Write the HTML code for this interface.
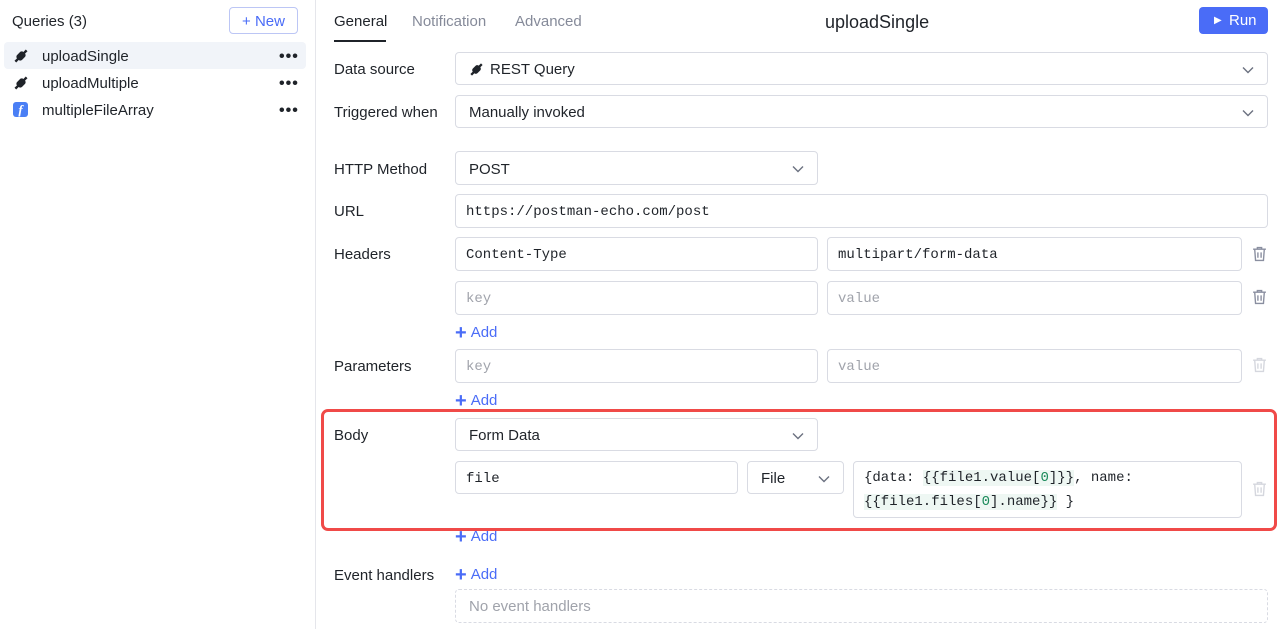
<!DOCTYPE html>
<html><head><meta charset="utf-8"><style>
*{box-sizing:border-box;margin:0;padding:0}
body{width:1280px;height:629px;overflow:hidden;background:#fff;font-family:"Liberation Sans",sans-serif;color:#1f2329;position:relative}
.a{position:absolute}
.lbl{position:absolute;left:334px;font-size:15px;color:#1f2329}
.in{position:absolute;border:1px solid #d9dbe3;border-radius:4px;background:#fff;font-size:15px;padding-left:13px;padding-top:2px;display:flex;align-items:center}
.mono{font-family:"Liberation Mono",monospace;font-size:14px}
.ph{color:#a0a3ab}
.chev{position:absolute;right:13px;top:50%;margin-top:-3px;width:12px;height:8px}
.add{position:absolute;left:455px;color:#4a6cf7;font-size:15px}
.add b{font-weight:bold;font-size:20px;vertical-align:-2px;margin-right:4px}
.trash{position:absolute;width:14px;height:15px}
.hl{background:#eef7f3}
.g{color:#1a8a5a}
.dots{position:absolute;left:279px;font-size:16px;font-weight:bold;letter-spacing:1px}
</style></head><body>
<div class="a" style="left:315px;top:0;width:1px;height:629px;background:#e5e6eb"></div>
<div class="a" style="left:12px;top:13px;font-size:15px">Queries (3)</div>
<div class="a" style="left:229px;top:7px;width:69px;height:27px;border:1px solid #bcc6f5;border-radius:4px;color:#4a6cf7;font-size:15px;text-align:center;line-height:27px">+ New</div>
<div class="a" style="left:4px;top:42px;width:302px;height:27px;background:#f1f4f9;border-radius:4px"></div>
<svg class="a" style="left:13px;top:48px" width="16" height="16" viewBox="0 0 16 16"><g transform="rotate(-45 8 8)" fill="#1f2329"><rect x="3.5" y="4.5" width="9" height="7" rx="2.5"/><rect x="12" y="6.8" width="4" height="2.4"/><rect x="0" y="6.8" width="4" height="2.4"/></g></svg>
<svg class="a" style="left:13px;top:75px" width="16" height="16" viewBox="0 0 16 16"><g transform="rotate(-45 8 8)" fill="#1f2329"><rect x="3.5" y="4.5" width="9" height="7" rx="2.5"/><rect x="12" y="6.8" width="4" height="2.4"/><rect x="0" y="6.8" width="4" height="2.4"/></g></svg>
<div class="a" style="left:13px;top:102px;width:15px;height:15px;background:#4a7ff5;border-radius:3px;color:#fff;font-style:italic;font-weight:bold;font-size:13px;text-align:center;line-height:15px;font-family:'Liberation Serif',serif">f</div>
<div class="a" style="left:42px;top:48px;font-size:15px">uploadSingle</div>
<div class="a" style="left:42px;top:75px;font-size:15px">uploadMultiple</div>
<div class="a" style="left:42px;top:102px;font-size:15px">multipleFileArray</div>
<div class="dots" style="top:48px">•••</div>
<div class="dots" style="top:75px">•••</div>
<div class="dots" style="top:102px">•••</div>
<div class="a" style="left:334px;top:13px;font-size:15px">General</div>
<div class="a" style="left:334px;top:40px;width:52px;height:2px;background:#1f2329"></div>
<div class="a" style="left:412px;top:13px;font-size:15px;color:#858a99">Notification</div>
<div class="a" style="left:515px;top:13px;font-size:15px;color:#858a99">Advanced</div>
<div class="a" style="left:825px;top:12px;font-size:18px">uploadSingle</div>
<div class="a" style="left:1199px;top:7px;width:69px;height:27px;background:#4a6cf7;border-radius:4px;color:#fff;font-size:15px;line-height:28px"><span style="position:absolute;left:15px;top:0;font-size:10px">▶</span><span style="position:absolute;left:30px">Run</span></div>
<div class="lbl" style="top:61px">Data source</div>
<div class="in" style="left:455px;top:52px;width:813px;height:33px"><svg width="15" height="15" viewBox="0 0 16 16" style="margin-right:6px"><g transform="rotate(-45 8 8)" fill="#1f2329"><rect x="3.5" y="4.5" width="9" height="7" rx="2.5"/><rect x="12" y="6.8" width="4" height="2.4"/><rect x="0" y="6.8" width="4" height="2.4"/></g></svg>REST Query<svg class="chev" viewBox="0 0 12 8"><path d="M1 1.5l5 5 5-5" fill="none" stroke="#6b7080" stroke-width="1.4"/></svg></div>
<div class="lbl" style="top:104px">Triggered when</div>
<div class="in" style="left:455px;top:95px;width:813px;height:33px">Manually invoked<svg class="chev" viewBox="0 0 12 8"><path d="M1 1.5l5 5 5-5" fill="none" stroke="#6b7080" stroke-width="1.4"/></svg></div>
<div class="lbl" style="top:161px">HTTP Method</div>
<div class="in" style="left:455px;top:151px;width:363px;height:34px">POST<svg class="chev" viewBox="0 0 12 8"><path d="M1 1.5l5 5 5-5" fill="none" stroke="#6b7080" stroke-width="1.4"/></svg></div>
<div class="lbl" style="top:203px">URL</div>
<div class="in mono" style="left:455px;top:194px;width:813px;height:34px;padding-left:10px">https://postman-echo.com/post</div>
<div class="lbl" style="top:246px">Headers</div>
<div class="in mono" style="left:455px;top:237px;width:363px;height:34px;padding-left:10px">Content-Type</div>
<div class="in mono" style="left:827px;top:237px;width:415px;height:34px;padding-left:10px">multipart/form-data</div>
<div class="in mono ph" style="left:455px;top:281px;width:363px;height:34px;padding-left:10px">key</div>
<div class="in mono ph" style="left:827px;top:281px;width:415px;height:34px;padding-left:10px">value</div>
<div class="add" style="top:322px"><b>+</b>Add</div>
<div class="lbl" style="top:358px">Parameters</div>
<div class="in mono ph" style="left:455px;top:349px;width:363px;height:34px;padding-left:10px">key</div>
<div class="in mono ph" style="left:827px;top:349px;width:415px;height:34px;padding-left:10px">value</div>
<div class="add" style="top:390px"><b>+</b>Add</div>
<div class="lbl" style="top:427px">Body</div>
<div class="in" style="left:455px;top:418px;width:363px;height:33px">Form Data<svg class="chev" viewBox="0 0 12 8"><path d="M1 1.5l5 5 5-5" fill="none" stroke="#6b7080" stroke-width="1.4"/></svg></div>
<div class="in mono" style="left:455px;top:461px;width:283px;height:33px;padding-left:10px">file</div>
<div class="in" style="left:747px;top:461px;width:97px;height:33px">File<svg class="chev" viewBox="0 0 12 8"><path d="M1 1.5l5 5 5-5" fill="none" stroke="#6b7080" stroke-width="1.4"/></svg></div>
<div class="in mono" style="left:853px;top:461px;width:389px;height:57px;padding-left:10px;display:block;line-height:24px;padding-top:4px">{data: <span class="hl">{{file1.value[<span class="g">0</span>]}}</span>, name:<br><span class="hl">{{file1.files[<span class="g">0</span>].name}}</span> }</div>
<div class="add" style="top:526px"><b>+</b>Add</div>
<div class="a" style="left:321px;top:409px;width:956px;height:122px;border:3px solid #f04a48;border-radius:7px"></div>
<div class="lbl" style="top:567px">Event handlers</div>
<div class="add" style="top:564px"><b>+</b>Add</div>
<div class="a" style="left:455px;top:589px;width:813px;height:34px;border:1px dashed #d9dbe3;border-radius:4px;color:#a0a3ab;font-size:15px;padding-left:13px;line-height:34px">No event handlers</div>
<svg class="trash" style="left:1252px;top:246px;width:15px;height:16px" viewBox="0 0 14 15"><path d="M1 3h12M5 3V1.5h4V3M2.5 3l.8 10.5h7.4L11.5 3M5.5 6v5M8.5 6v5" fill="none" stroke="#8a8fa0" stroke-width="1.3"/></svg>
<svg class="trash" style="left:1252px;top:289px;width:15px;height:16px" viewBox="0 0 14 15"><path d="M1 3h12M5 3V1.5h4V3M2.5 3l.8 10.5h7.4L11.5 3M5.5 6v5M8.5 6v5" fill="none" stroke="#8a8fa0" stroke-width="1.3"/></svg>
<svg class="trash" style="left:1252px;top:357px;width:15px;height:16px" viewBox="0 0 14 15"><path d="M1 3h12M5 3V1.5h4V3M2.5 3l.8 10.5h7.4L11.5 3M5.5 6v5M8.5 6v5" fill="none" stroke="#d5d7de" stroke-width="1.3"/></svg>
<svg class="trash" style="left:1252px;top:481px;width:15px;height:16px" viewBox="0 0 14 15"><path d="M1 3h12M5 3V1.5h4V3M2.5 3l.8 10.5h7.4L11.5 3M5.5 6v5M8.5 6v5" fill="none" stroke="#d5d7de" stroke-width="1.3"/></svg>
</body></html>
